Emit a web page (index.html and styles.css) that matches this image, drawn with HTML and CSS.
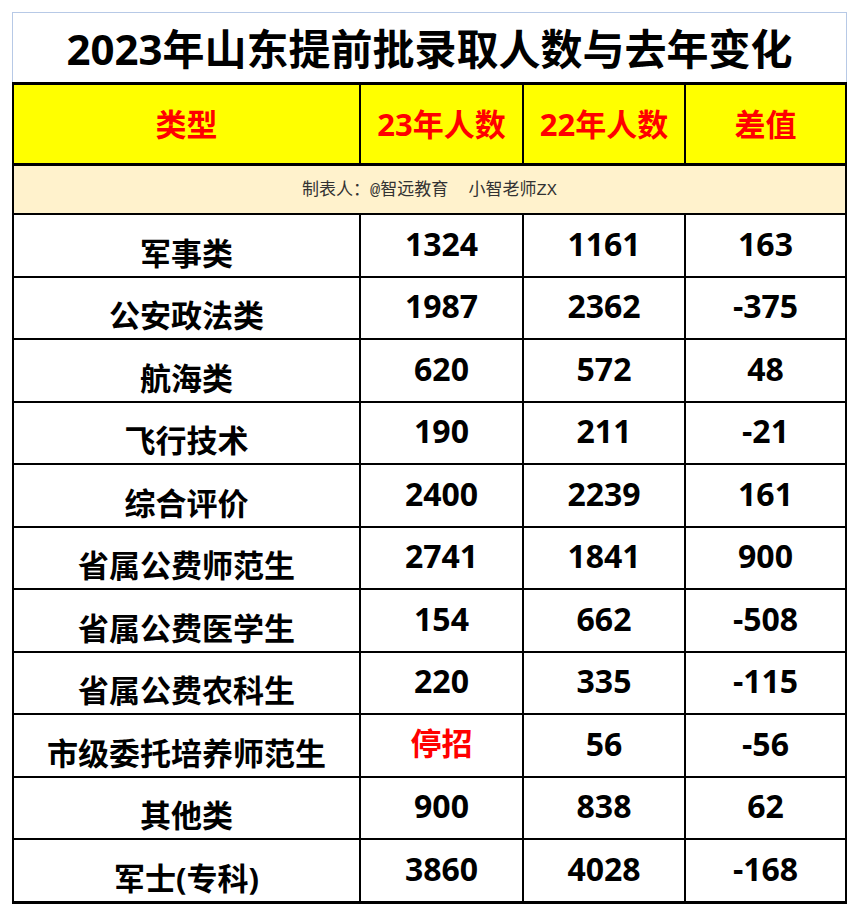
FILE: index.html
```html
<!DOCTYPE html>
<html lang="zh-CN">
<head>
<meta charset="utf-8">
<title>2023年山东提前批录取人数与去年变化</title>
<link rel="stylesheet" href="styles.css">
</head>
<body>
<div class="sheet">
  <div class="title">2023年山东提前批录取人数与去年变化</div>
  <div class="grid">
    <div class="cell head">类型</div>
    <div class="cell head">23年人数</div>
    <div class="cell head">22年人数</div>
    <div class="cell head">差值</div>
    <div class="cell note">制表人：@智远教育&nbsp;&nbsp;小智老师ZX</div>

    <div class="cell cat">军事类</div><div class="cell num">1324</div><div class="cell num">1161</div><div class="cell num">163</div>
    <div class="cell cat">公安政法类</div><div class="cell num">1987</div><div class="cell num">2362</div><div class="cell num">-375</div>
    <div class="cell cat">航海类</div><div class="cell num">620</div><div class="cell num">572</div><div class="cell num">48</div>
    <div class="cell cat">飞行技术</div><div class="cell num">190</div><div class="cell num">211</div><div class="cell num">-21</div>
    <div class="cell cat">综合评价</div><div class="cell num">2400</div><div class="cell num">2239</div><div class="cell num">161</div>
    <div class="cell cat">省属公费师范生</div><div class="cell num">2741</div><div class="cell num">1841</div><div class="cell num">900</div>
    <div class="cell cat">省属公费医学生</div><div class="cell num">154</div><div class="cell num">662</div><div class="cell num">-508</div>
    <div class="cell cat">省属公费农科生</div><div class="cell num">220</div><div class="cell num">335</div><div class="cell num">-115</div>
    <div class="cell cat">市级委托培养师范生</div><div class="cell num stop">停招</div><div class="cell num">56</div><div class="cell num">-56</div>
    <div class="cell cat">其他类</div><div class="cell num">900</div><div class="cell num">838</div><div class="cell num">62</div>
    <div class="cell cat">军士(专科)</div><div class="cell num">3860</div><div class="cell num">4028</div><div class="cell num">-168</div>
  </div>
</div>
</body>
</html>
```

FILE: styles.css
```css
html, body {
  margin: 0;
  padding: 0;
  background: #ffffff;
}

.sheet {
  margin: 12px 0 0 12px;
  width: 835px;
  font-family: "Open Sans", "Noto Sans CJK SC", sans-serif;
  color: #000;
}

.title {
  box-sizing: border-box;
  height: 70px;
  border: 1px solid #b7c9e6;
  border-bottom: none;
  display: flex;
  align-items: center;
  justify-content: center;
  font-size: 42px;
  font-weight: 700;
  line-height: 1;
  padding-top: 3px;
}

.grid {
  display: grid;
  grid-template-columns: 345px 161px 160px 159px;
  grid-template-rows: 78px 48px repeat(11, 60.5px);
  gap: 2px;
  background: #000;
  border-left: 2px solid #000;
  border-right: 2px solid #000;
  border-top: 3px solid #000;
  border-bottom: 3px solid #000;
}

.cell {
  background: #fff;
  display: flex;
  align-items: center;
  justify-content: center;
  line-height: 1;
  font-weight: 700;
}

.head {
  background: #ffff00;
  color: #ff0000;
  font-size: 31px;
}

.note {
  grid-column: 1 / -1;
  background: #fff2cc;
  border-top: 1px solid #000;
  font-family: "Liberation Mono", "Noto Sans CJK SC", monospace;
  font-weight: 400;
  font-size: 17px;
  color: #333333;
  padding-top: 2px;
}

.cat {
  font-size: 31px;
  padding-top: 16px;
}

.num {
  font-size: 32px;
  padding-bottom: 3px;
}

.stop {
  color: #ff0000;
  font-size: 31px;
}
```
